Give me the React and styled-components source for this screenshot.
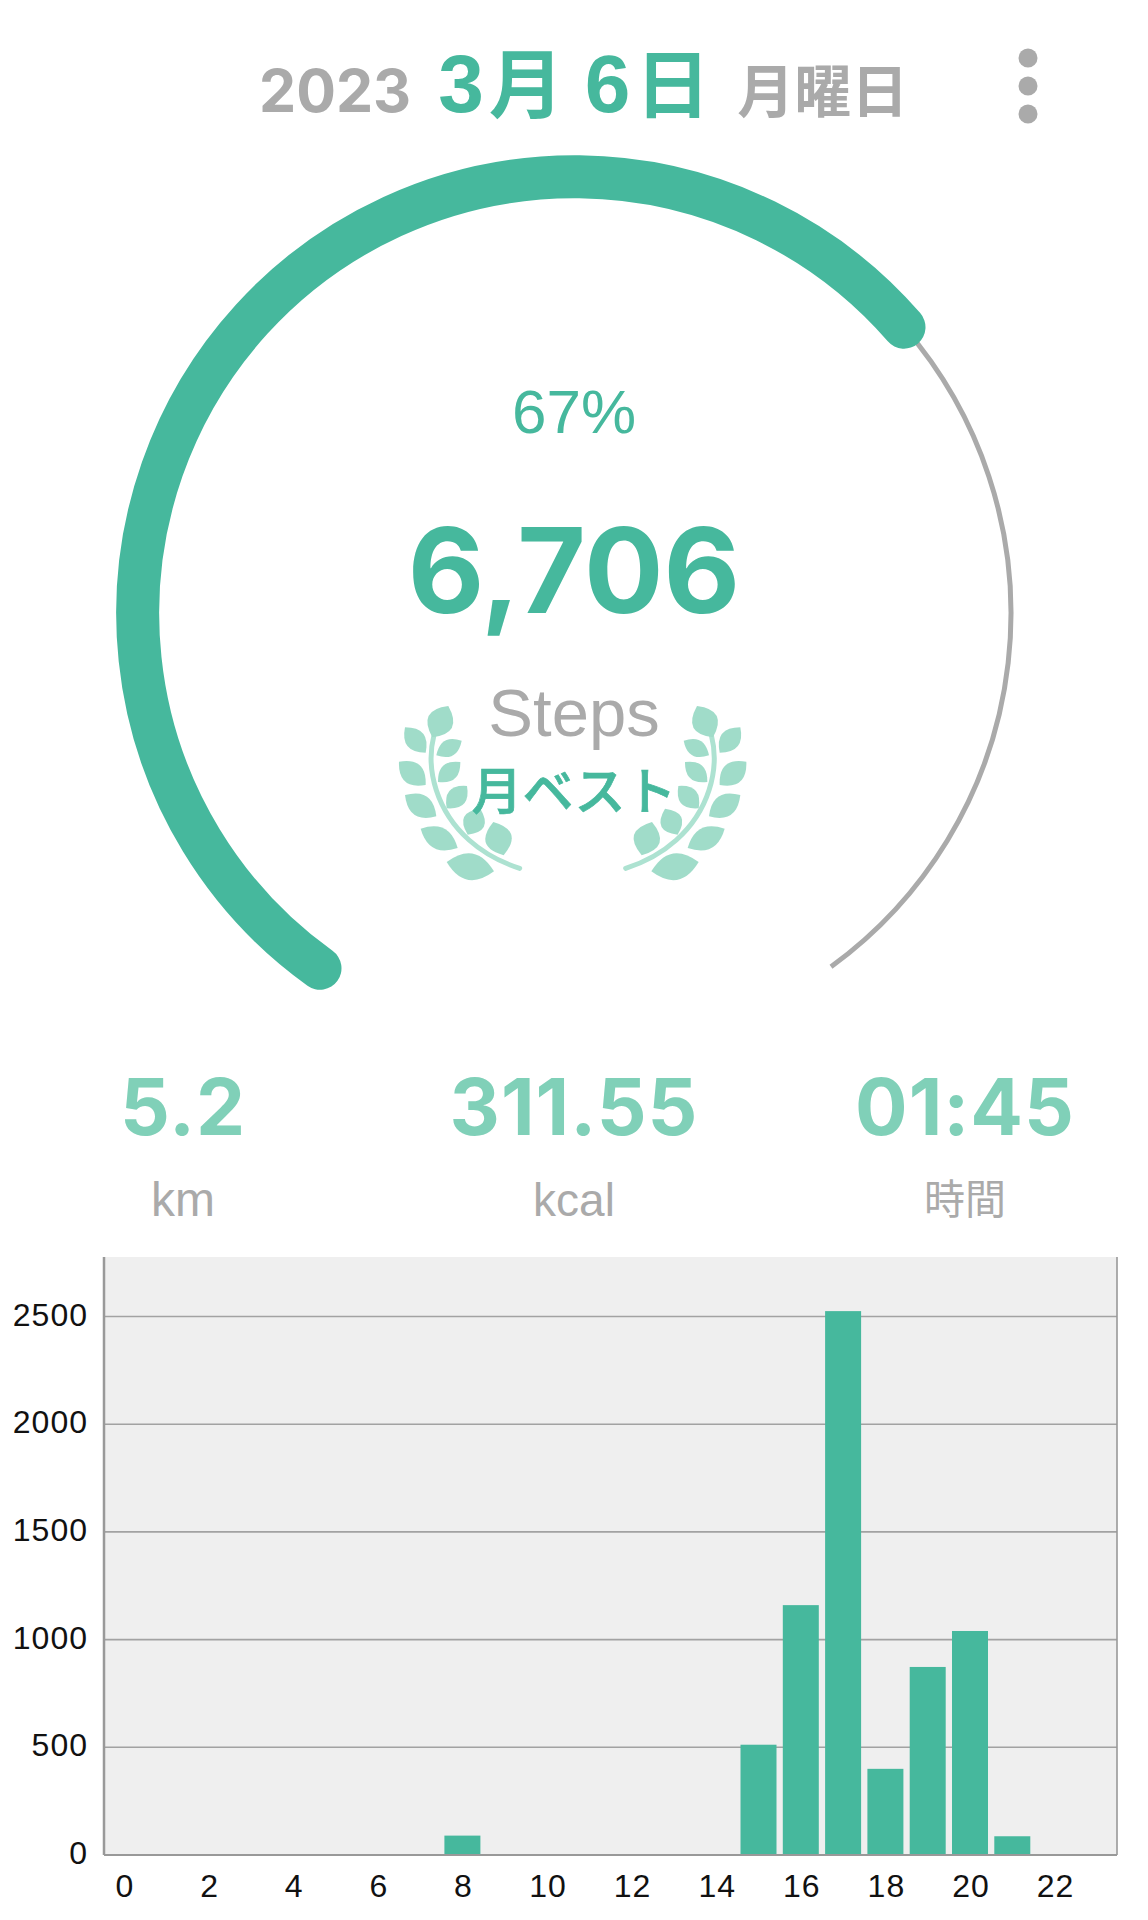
import React from 'react';
import styled, {createGlobalStyle} from 'styled-components';

const GREEN = '#46b89d';
const PALE_GREEN = '#80d0b8';
const LEAF = '#a0dcc9';
const GREY = '#aaaaaa';
const SANS = '"Liberation Sans", "Noto Sans CJK JP", sans-serif';
const NUMERIC = 'Inter, "Liberation Sans", sans-serif';

const GlobalStyle = createGlobalStyle`
  html, body {
    margin: 0;
    background: #fff;
    font-family: ${SANS};
  }
  body {
    overflow-x: hidden;
  }
`;

const Page = styled.div`
  width: 1148px;
  height: 1920px;
  display: flex;
  flex-direction: column;
  overflow: hidden;
`;

const Header = styled.header`
  height: 130px;
  box-sizing: border-box;
  padding: 44px 110px 0 259px;
  display: flex;
  align-items: flex-start;
`;

const DateLine = styled.div`
  display: flex;
  align-items: baseline;
  gap: 27px;
`;

const Year = styled.span`
  font-family: ${NUMERIC};
  font-size: 59px;
  line-height: 80px;
  font-weight: 700;
  color: ${GREY};
`;

const MonthDay = styled.span`
  font-size: 75px;
  line-height: 80px;
  font-weight: 700;
  color: ${GREEN};
`;

const DateDigit = styled.span`
  font-size: 82px;
  margin-right: 5px;
`;

const Weekday = styled.span`
  font-size: 57px;
  line-height: 80px;
  font-weight: 700;
  color: ${GREY};
`;

const MenuDots = styled.svg`
  display: block;
  margin: 4px 0 0 auto;
  width: 20px;
  height: 76px;
  fill: ${GREY};
`;

const Gauge = styled.section`
  position: relative;
  height: 880px;
`;

const GaugeArcs = styled.svg`
  display: block;
  width: 1148px;
  height: 880px;
`;

const GaugeText = styled.div`
  position: absolute;
  top: 240px;
  left: 0;
  right: 0;
  display: flex;
  flex-direction: column;
  align-items: center;
`;

const Percent = styled.div`
  font-size: 62px;
  line-height: 84px;
  color: ${GREEN};
  font-weight: 400;
`;

const StepCount = styled.div`
  margin-top: 46px;
  font-family: ${NUMERIC};
  font-size: 118px;
  line-height: 140px;
  font-weight: 700;
  color: ${GREEN};
`;

const StepUnit = styled.div`
  margin-top: 35px;
  font-size: 67px;
  line-height: 76px;
  color: ${GREY};
`;

const Award = styled.div`
  position: relative;
  margin-top: 10px;
  width: 390px;
  display: flex;
  justify-content: center;
`;

const AwardLabel = styled.div`
  position: relative;
  font-size: 51px;
  line-height: 64px;
  font-weight: 500;
  color: ${GREEN};
  -webkit-text-stroke: 0.7px ${GREEN};
`;

const Laurel = styled.svg`
  position: absolute;
  left: 0;
  top: -101px;
  width: 390px;
  height: 240px;
`;

const Stats = styled.section`
  height: 247px;
  box-sizing: border-box;
  padding-top: 49px;
  display: grid;
  grid-template-columns: repeat(3, 300px);
  column-gap: 91px;
  justify-content: center;
  align-content: start;
`;

const Stat = styled.div`
  display: flex;
  flex-direction: column;
  align-items: center;
`;

const StatValue = styled.div`
  font-family: ${NUMERIC};
  font-size: 78px;
  line-height: 96px;
  font-weight: 700;
  letter-spacing: 1px;
  color: ${PALE_GREEN};
`;

const StatUnit = styled.div`
  margin-top: 17px;
  font-size: ${props => props.$size}px;
  line-height: 56px;
  color: ${GREY};
`;

const Chart = styled.svg`
  display: block;
  width: 1148px;
  height: 663px;
`;

const Tick = styled.text`
  font-family: ${SANS};
  font-size: 32px;
  letter-spacing: 1px;
  fill: #111;
`;

const HOURS = {8: 90, 15: 512, 16: 1160, 17: 2525, 18: 400, 19: 873, 20: 1040, 21: 87};

const PLOT = {left: 104, right: 1117, top: 0, bottom: 598};
const PX_PER_STEP = 107.7 / 500;
const BAR_PITCH = 42.3;
const BAR_WIDTH = 36;

function Leaf({x1, y1, x2, y2, w}) {
    // almond shape between two tips, bulging by w on both sides
    const mx = (x1 + x2) / 2;
    const my = (y1 + y2) / 2;
    const dx = x2 - x1;
    const dy = y2 - y1;
    const len = Math.hypot(dx, dy);
    const nx = -dy / len * w;
    const ny = dx / len * w;
    return <path d={`M${x1} ${y1}Q${mx + nx} ${my + ny} ${x2} ${y2}Q${mx - nx} ${my - ny} ${x1} ${y1}Z`}/>;
}

const LEAVES = [
    [160, 232, 208, 138, 78],
    [78, 202, 140, 278, 60],
    [172, 286, 248, 242, 50],
    [60, 305, 140, 375, 66],
    [177, 366, 244, 306, 52],
    [78, 405, 172, 469, 66],
    [203, 445, 264, 378, 58],
    [125, 506, 236, 564, 66],
    [266, 524, 304, 446, 66],
    [343, 486, 374, 586, 80],
    [203, 606, 345, 634, 80],
];

function LaurelHalf() {
    return (
        <g>
            <path d="M165 225C138 330 175 455 270 540C320 585 375 610 422 625" fill="none" stroke="#ade2d1"
                  strokeWidth="15" strokeLinecap="round"/>
            {LEAVES.map(([x1, y1, x2, y2, w], i) => <Leaf key={i} x1={x1} y1={y1} x2={x2} y2={y2} w={w}/>)}
        </g>
    );
}

function StepChart() {
    const yOf = value => PLOT.bottom - value * PX_PER_STEP;
    const gridValues = [500, 1000, 1500, 2000, 2500];
    const yLabels = [0, ...gridValues];
    const xLabels = Array.from({length: 12}, (_, i) => i * 2);

    return (
        <Chart viewBox="0 0 1148 663">
            <rect x={PLOT.left} y={PLOT.top} width={PLOT.right - PLOT.left} height={PLOT.bottom} fill="#efefef"/>
            {gridValues.map(v => (
                <line key={v} x1={PLOT.left} x2={PLOT.right} y1={yOf(v)} y2={yOf(v)} stroke="#a2a2a2" strokeWidth="1.6"/>
            ))}
            {Object.entries(HOURS).map(([hour, value]) => (
                <rect key={hour} x={106 + hour * BAR_PITCH} y={yOf(value)} width={BAR_WIDTH}
                      height={value * PX_PER_STEP} fill={GREEN}/>
            ))}
            <line x1={PLOT.left} x2={PLOT.left} y1={PLOT.top} y2={PLOT.bottom} stroke="#999" strokeWidth="2.5"/>
            <line x1={PLOT.right} x2={PLOT.right} y1={PLOT.top} y2={PLOT.bottom} stroke="#999" strokeWidth="1.6"/>
            <line x1={PLOT.left} x2={PLOT.right} y1={PLOT.bottom} y2={PLOT.bottom} stroke="#999" strokeWidth="2"/>
            {yLabels.map(v => (
                <Tick key={v} x={88} y={yOf(v) + 9} textAnchor="end">{v}</Tick>
            ))}
            {xLabels.map(h => (
                <Tick key={h} x={125 + h * BAR_PITCH} y={640} textAnchor="middle">{h}</Tick>
            ))}
        </Chart>
    );
}

export default function App() {
    return (
        <Page>
            <GlobalStyle/>
            <Header>
                <DateLine>
                    <Year>2023</Year>
                    <MonthDay><DateDigit>3</DateDigit>月 <DateDigit>6</DateDigit>日</MonthDay>
                    <Weekday>月曜日</Weekday>
                </DateLine>
                <MenuDots viewBox="0 0 20 76">
                    <circle cx="10" cy="10" r="9.5"/>
                    <circle cx="10" cy="38" r="9.5"/>
                    <circle cx="10" cy="66" r="9.5"/>
                </MenuDots>
            </Header>

            <Gauge>
                <GaugeArcs viewBox="0 0 1148 880">
                    <path d="M831 836.7A436.6 436.6 0 0 0 904 197.2" fill="none" stroke={GREY} strokeWidth="5"/>
                    <path d="M320 838.3A436.6 436.6 0 1 1 904 197.2" fill="none" stroke={GREEN} strokeWidth="43"
                          strokeLinecap="round"/>
                </GaugeArcs>
                <GaugeText>
                    <Percent>67%</Percent>
                    <StepCount>6,706</StepCount>
                    <StepUnit>Steps</StepUnit>
                    <Award>
                        <Laurel viewBox="0 0 1170 720" fill={LEAF}>
                            <LaurelHalf/>
                            <g transform="translate(1162 0) scale(-1 1)">
                                <LaurelHalf/>
                            </g>
                        </Laurel>
                        <AwardLabel>月ベスト</AwardLabel>
                    </Award>
                </GaugeText>
            </Gauge>

            <Stats>
                <Stat>
                    <StatValue>5.2</StatValue>
                    <StatUnit $size={48}>km</StatUnit>
                </Stat>
                <Stat>
                    <StatValue>311.55</StatValue>
                    <StatUnit $size={46}>kcal</StatUnit>
                </Stat>
                <Stat>
                    <StatValue>01:45</StatValue>
                    <StatUnit $size={41}>時間</StatUnit>
                </Stat>
            </Stats>

            <StepChart/>
        </Page>
    );
}
